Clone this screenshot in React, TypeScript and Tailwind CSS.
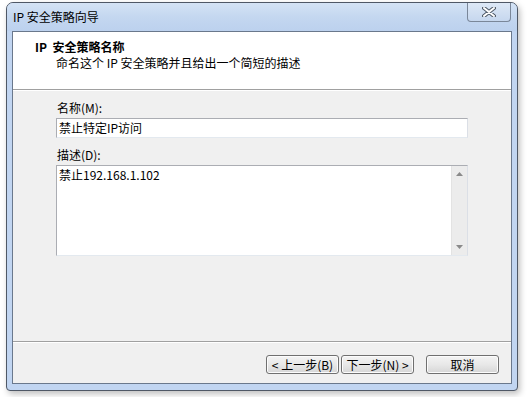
import React from 'react';

const font = { fontFamily: '"Noto Sans CJK SC", "Liberation Sans", sans-serif' };

const Btn: React.FC<{ children: React.ReactNode; className?: string }> = ({ children, className = '' }) => (
  <div
    className={`h-[19px] w-[73px] flex items-center justify-center rounded-[3px] border border-[#707070] bg-gradient-to-b from-[#f4f4f4] via-[#e8e8e8] to-[#d6d6d6] text-[12px] leading-none text-black shadow-[inset_0_0_0_1px_#fcfcfc] ${className}`}
  >
    {children}
  </div>
);

const App: React.FC = () => {
  return (
    <div className="w-[530px] h-[397px] bg-white pt-[2px] pl-[6px]" style={font}>
      {/* window */}
      <div className="w-[512px] h-[389px] flex flex-col rounded-t-[7px] rounded-b-[4px] border border-[#4f5866] bg-[#c1d5f1] shadow-[2px_3px_6px_rgba(0,0,0,0.25)] overflow-hidden">
        {/* title bar */}
        <div className="h-[28px] flex items-start justify-between bg-gradient-to-b from-[#d4e3f5] via-[#c4d7f0] to-[#bcd1ee] pl-[6px] pr-[6px]">
          <span className="mt-[6px] text-[12px] leading-[16px] text-black">IP 安全策略向导</span>
          <div className="w-[44px] h-[19px] flex items-center justify-center rounded-b-[4px] border border-t-0 border-[#7a8799] bg-gradient-to-b from-[#dde8f6] to-[#c6d7ee]">
            <svg width="14" height="10" viewBox="0 0 14 10">
              <path d="M2 1 L12 9 M12 1 L2 9" stroke="#4f5a68" strokeWidth="4" strokeLinecap="round" />
              <path d="M2 1 L12 9 M12 1 L2 9" stroke="#ffffff" strokeWidth="2" strokeLinecap="round" />
            </svg>
          </div>
        </div>

        {/* client */}
        <div className="mx-[5px] h-[353px] flex flex-col border border-[#6a788c] bg-[#f0f0f0]">
          {/* header */}
          <div className="h-[58px] bg-white border-b border-[#a0a0a0] pl-[22px] pt-[7px]">
            <div className="text-[12px] leading-[16px] font-bold text-black">IP&nbsp;&nbsp;安全策略名称</div>
            <div className="pl-[21px] text-[12px] leading-[16px] text-black">命名这个 IP 安全策略并且给出一个简短的描述</div>
          </div>
          <div className="h-px bg-white" />

          {/* body */}
          <div className="flex-1 flex flex-col pl-[43px] pt-[9px]">
            <div className="text-[12px] leading-[16px] text-black pl-[1px]">名称(M):</div>
            <div className="mt-[2px] w-[412px] h-[20px] border border-[#abadb3] border-r-[#dbdfe6] border-b-[#e3e9ef] bg-white pl-[2px] text-[12px] leading-[18px] text-black">
              禁止特定IP访问
            </div>
            <div className="mt-[9px] text-[12px] leading-[16px] text-black pl-[1px]">描述(D):</div>
            <div className="mt-[2px] w-[412px] h-[91px] flex border border-[#abadb3] border-r-[#dbdfe6] border-b-[#e3e9ef] bg-white">
              <div className="flex-1 pl-[2px] pt-[1px] text-[12px] leading-[16px] text-black">禁止192.168.1.102</div>
              <div className="w-[16px] flex flex-col items-center justify-between bg-[#ececec] border-l border-[#e3e3e3] py-[6px]">
                <svg width="7" height="4" viewBox="0 0 7 4">
                  <path d="M0 4 L3.5 0 L7 4 Z" fill="#8a8a8a" />
                </svg>
                <svg width="7" height="4" viewBox="0 0 7 4">
                  <path d="M0 0 L3.5 4 L7 0 Z" fill="#8a8a8a" />
                </svg>
              </div>
            </div>
          </div>

          {/* footer */}
          <div className="border-t border-[#a0a0a0]">
            <div className="h-px bg-white" />
            <div className="h-[40px] flex items-start pt-[12px] pl-[253px]">
              <Btn>&lt; 上一步(B)</Btn>
              <Btn className="ml-[2px]">下一步(N) &gt;</Btn>
              <Btn className="ml-[12px]">取消</Btn>
            </div>
          </div>
        </div>
      </div>
    </div>
  );
};

export default App;
